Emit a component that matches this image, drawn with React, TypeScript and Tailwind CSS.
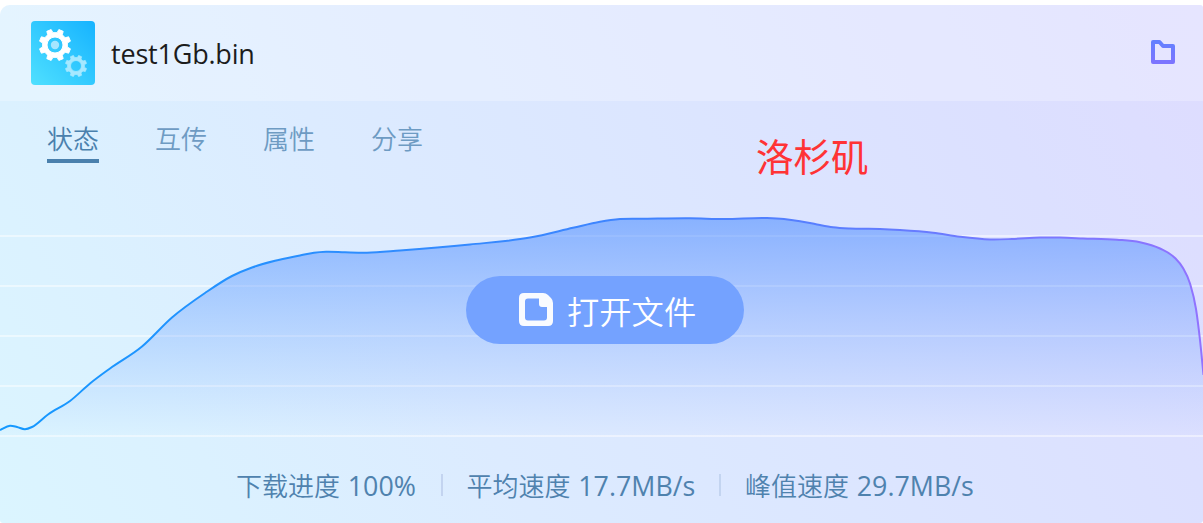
const TABS = ['状态', '互传', '属性', '分享'];

const STATS = [
  { label: '下载进度', value: '100%', width: 'w-[181px]' },
  { label: '平均速度', value: '17.7MB/s', width: 'w-[229px]' },
  { label: '峰值速度', value: '29.7MB/s', width: 'w-[229px]' },
];

// speed samples, in chart coordinates
const SPEED: [number, number][] = [
  [0, 245], [10, 240.8], [17, 242], [25, 244.2], [32, 242], [48, 229.5], [70, 216],
  [90, 198.5], [110, 183.5], [142, 161.5], [172, 132.5], [205, 108], [232, 91],
  [252, 82.5], [275, 75.8], [300, 70.5], [314, 67.7], [326, 66.7], [345, 67.3], [367, 67.7],
  [400, 65.5], [470, 59.5], [530, 52.5], [573, 42.8], [600, 36.7], [620, 34], [645, 33.7],
  [690, 33.3], [725, 34], [767, 33], [784, 34], [800, 36.2], [817, 39.5], [833, 42.3],
  [850, 43.6], [880, 44], [900, 45], [933, 47.7], [960, 51.7], [990, 54.4], [1012, 54],
  [1040, 52.5], [1060, 52.6], [1083, 53.4], [1117, 54.7], [1140, 57.2], [1160, 63.5],
  [1175, 73], [1183, 83], [1190, 98.5], [1196, 124], [1200, 155], [1203.5, 190],
];

const GRID = [51, 101, 151, 201, 251];

function smooth(points: [number, number][]) {
  const slope = (i: number) =>
    (points[i + 1][1] - points[i][1]) / (points[i + 1][0] - points[i][0]);
  const tangent = (i: number) => {
    if (i === 0) return slope(0);
    if (i === points.length - 1) return slope(i - 1);
    const h0 = points[i][0] - points[i - 1][0];
    const h1 = points[i + 1][0] - points[i][0];
    return (slope(i - 1) * h1 + slope(i) * h0) / (h0 + h1);
  };
  let d = `M${points[0][0]},${points[0][1]}`;
  for (let i = 0; i < points.length - 1; i++) {
    const [x1, y1] = points[i];
    const [x2, y2] = points[i + 1];
    const step = (x2 - x1) / 3;
    d += `C${x1 + step},${y1 + tangent(i) * step} ${x2 - step},${y2 - tangent(i + 1) * step} ${x2},${y2}`;
  }
  return d;
}

function gear(cx: number, cy: number, outer: number, inner: number) {
  const pts: string[] = [];
  for (let i = 0; i < 8; i++) {
    const mid = 22.5 + i * 45;
    [[-13, inner], [-8.5, outer], [8.5, outer], [13, inner]].forEach(([off, r]) => {
      const a = ((mid + off) * Math.PI) / 180;
      pts.push(`${(cx + r * Math.cos(a)).toFixed(2)},${(cy + r * Math.sin(a)).toFixed(2)}`);
    });
  }
  return `M${pts.join('L')}Z`;
}

function hole(cx: number, cy: number, r: number) {
  return `M${cx - r},${cy}a${r},${r} 0 1 0 ${r * 2},0a${r},${r} 0 1 0 ${-r * 2},0Z`;
}

function BinIcon() {
  return (
    <svg width="64" height="64" viewBox="0 0 64 64" className="shrink-0">
      <defs>
        <linearGradient id="bin" x1="0" y1="1" x2="1" y2="0">
          <stop offset="0" stopColor="#4fe0ff" />
          <stop offset="1" stopColor="#16b3ff" />
        </linearGradient>
      </defs>
      <rect width="64" height="64" rx="4" fill="url(#bin)" />
      <path d={gear(24, 24, 15.9, 12.5) + hole(24, 24, 8)} fill="#fff" fillRule="evenodd" stroke="#fff" strokeWidth="1" strokeLinejoin="round" />
      <circle cx="24" cy="24" r="4.2" fill="#a6e6ff" />
      <path d={gear(45, 45, 10.8, 8.5) + hole(45, 45, 5.5)} fill="#a6e8ff" fillRule="evenodd" stroke="#a6e8ff" strokeWidth=".8" strokeLinejoin="round" />
    </svg>
  );
}

function FolderIcon() {
  return (
    <svg width="24" height="24" viewBox="0 0 24 24" fill="none">
      <defs>
        <linearGradient id="folder" x1="0" y1="0" x2="0" y2="1">
          <stop offset="0" stopColor="#6480ff" />
          <stop offset="1" stopColor="#7c74ff" />
        </linearGradient>
      </defs>
      <path d="M2 2H8.500L12 6H22V22H2Z" stroke="url(#folder)" strokeWidth="4" strokeLinejoin="round" />
    </svg>
  );
}

function FileIcon() {
  return (
    <svg width="34" height="33" viewBox="0 0 34 33" className="mb-0.5">
      <path
        fill="#fff"
        fillOpacity=".96"
        fillRule="evenodd"
        d="M5 0H24Q27 0 29 2L32 5Q34 7 34 10V28Q34 33 29 33H5Q0 33 0 28V5Q0 0 5 0ZM9 5.5Q6 5.5 6 8.5V24.5Q6 27.500 9 27.500H25Q28 27.500 28 24.500V14H23Q20 14 20 11V5.500Z"
      />
    </svg>
  );
}

function SpeedChart() {
  const line = smooth(SPEED);
  return (
    <svg width="1203" height="253" viewBox="0 0 1203 253" className="block">
      <defs>
        <linearGradient id="area" gradientUnits="userSpaceOnUse" x1="0" y1="33" x2="0" y2="253">
          <stop offset="0" stopColor="#3c82ff" stopOpacity=".52" />
          <stop offset="1" stopColor="#5c94ff" stopOpacity="0" />
        </linearGradient>
        <linearGradient id="line" gradientUnits="userSpaceOnUse" x1="0" y1="0" x2="1203" y2="0">
          <stop offset="0" stopColor="#1499ff" />
          <stop offset=".55" stopColor="#4283ff" />
          <stop offset="1" stopColor="#9173ff" />
        </linearGradient>
      </defs>
      {GRID.map((y) => (
        <rect key={y} x="0" y={y - 1} width="1203" height="2" fill="#fff" fillOpacity=".48" />
      ))}
      <path d={`${line}V253H0Z`} fill="url(#area)" />
      <path d={line} fill="none" stroke="url(#line)" strokeWidth="2" />
    </svg>
  );
}

export default function App() {
  return (
    <div className="h-[523px] w-[1203px] overflow-hidden bg-white pt-[5px] font-['Open_Sans','Noto_Sans_CJK_SC',sans-serif]">
      <div className="relative flex h-[518px] flex-col overflow-hidden rounded-[3px] rounded-tl-[10px] bg-[linear-gradient(61deg,#dbf5ff_0%,#dbf1ff_16%,#dcebff_36%,#dce6ff_58%,#dce0ff_82%,#dedcff_100%)]">
        <header className="flex h-24 shrink-0 items-center bg-white/25 pr-7 pl-[31px]">
          <BinIcon />
          <h1 className="ml-4 text-[27px] leading-none tracking-[-0.2px] text-[#1c1c1c]">test1Gb.bin</h1>
          <button className="relative -top-px ml-auto" aria-label="folder">
            <FolderIcon />
          </button>
        </header>

        <nav className="flex h-[84px] shrink-0 gap-14 pt-5 pl-[47px]">
          {TABS.map((tab, i) => (
            <button
              key={tab}
              className={
                i === 0
                  ? 'h-[42px] border-b-4 border-[#4a80ad] pb-0.5 text-[26px] leading-9 font-[350] text-[#4a80ad]'
                  : 'h-[42px] border-b-4 border-transparent pb-0.5 text-[26px] leading-9 font-[350] text-[#6e9bc3]'
              }
            >
              {tab}
            </button>
          ))}
        </nav>

        <div className="relative h-[253px] shrink-0">
          <SpeedChart />
          <button className="absolute top-[91px] left-[466px] flex h-[68px] w-[278px] items-center gap-[14px] rounded-[34px] bg-[#74a2ff] pl-[53px] text-[32.3px] leading-none text-white">
            <FileIcon />
            <span className="pt-[3px] font-[350] whitespace-nowrap">打开文件</span>
          </button>
        </div>

        <footer className="flex h-[85px] shrink-0 items-center pt-2 pl-[236px] text-[26px] text-[#4f82ae]">
          {STATS.map((stat, i) => (
            <div key={stat.label} className="flex items-center">
              {i > 0 && <span className="mr-6 ml-[23.5px] h-[22px] w-0.5 bg-[#c3d4f0]" />}
              <span className={`${stat.width} pt-[3px] whitespace-nowrap`}>
                <span className="font-[350]">{stat.label}</span> <span className="ml-px text-[26.8px]">{stat.value}</span>
              </span>
            </div>
          ))}
        </footer>

        <span className="absolute top-[130px] left-[756px] text-[37.5px] leading-11 text-[#ff3335]">洛杉矶</span>
      </div>
    </div>
  );
}
